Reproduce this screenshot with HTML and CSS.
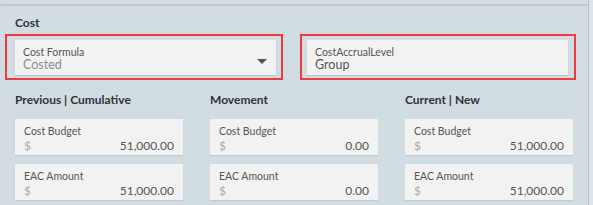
FILE: index.html
```html
<!DOCTYPE html>
<html lang="en">
<head>
<meta charset="UTF-8">
<meta name="viewport" content="width=device-width, initial-scale=1.0">
<title>Cost</title>
<link rel="stylesheet" href="styles.css">
</head>
<body>
    <div class="panel">
        <div class="top-band"></div>

        <h3 class="section-title">Cost</h3>

        <div class="field-row">
            <div class="highlight hl-formula">
                <div class="field field-select">
                    <div class="field-label">Cost Formula</div>
                    <div class="field-value muted">Costed</div>
                    <span class="caret"></span>
                </div>
            </div>
            <div class="highlight hl-accrual">
                <div class="field">
                    <div class="field-label">CostAccrualLevel</div>
                    <div class="field-value">Group</div>
                </div>
            </div>
        </div>

        <div class="columns">
            <div class="col">
                <h4 class="col-title">Previous | Cumulative</h4>
                <div class="card">
                    <div class="card-label">Cost Budget</div>
                    <div class="card-row"><span class="currency">$</span><span class="amount">51,000.00</span></div>
                </div>
                <div class="card">
                    <div class="card-label">EAC Amount</div>
                    <div class="card-row"><span class="currency">$</span><span class="amount">51,000.00</span></div>
                </div>
            </div>
            <div class="col">
                <h4 class="col-title">Movement</h4>
                <div class="card">
                    <div class="card-label">Cost Budget</div>
                    <div class="card-row"><span class="currency">$</span><span class="amount">0.00</span></div>
                </div>
                <div class="card">
                    <div class="card-label">EAC Amount</div>
                    <div class="card-row"><span class="currency">$</span><span class="amount">0.00</span></div>
                </div>
            </div>
            <div class="col">
                <h4 class="col-title">Current | New</h4>
                <div class="card">
                    <div class="card-label">Cost Budget</div>
                    <div class="card-row"><span class="currency">$</span><span class="amount">51,000.00</span></div>
                </div>
                <div class="card">
                    <div class="card-label">EAC Amount</div>
                    <div class="card-row"><span class="currency">$</span><span class="amount">51,000.00</span></div>
                </div>
            </div>
        </div>
    </div>
</body>
</html>
```

FILE: styles.css
```css
body {
    margin: 0;
    padding: 0;
    font-family: Lato, "Noto Sans", sans-serif;
    background-color: #dde4e7;
    color: #444;
}
.panel {
    width: 589px;
    height: 205px;
    background-color: #d1dde2;
    border-right: 1px solid #b7c2c6;
    box-sizing: border-box;
    overflow: hidden;
}
.top-band {
    height: 4px;
    background-color: #d5dfe3;
    border-bottom: 1px solid #b9c4c8;
    box-shadow: 0 1px 2px rgba(0, 0, 0, 0.08);
}
.section-title {
    margin: 10px 0 0 15px;
    font-size: 12px;
    line-height: 16px;
    font-weight: bold;
    color: #333;
}

/* highlighted fields */
.field-row {
    display: flex;
    gap: 17px;
    margin-top: 3px;
    padding-left: 5px;
}
.highlight {
    border: 2px solid #ee3b3f;
    box-sizing: border-box;
    height: 46px;
    padding-top: 4px;
}
.hl-formula {
    width: 278px;
    padding-left: 8px;
}
.hl-accrual {
    width: 276px;
    padding-left: 5px;
}
.field {
    position: relative;
    width: 261px;
    height: 35px;
    box-sizing: border-box;
    padding: 6px 8px 0;
    background-color: #f2f2f2;
    box-shadow: 0 1px 1px rgba(0, 0, 0, 0.12);
}
.field-label {
    font-size: 10.5px;
    line-height: 12px;
    color: #555;
}
.field-value {
    font-size: 12.5px;
    line-height: 14px;
    color: #555;
}
.field-value.muted {
    color: #8c8c8c;
}
.caret {
    position: absolute;
    right: 9px;
    top: 19px;
    width: 0;
    height: 0;
    border-left: 5px solid transparent;
    border-right: 5px solid transparent;
    border-top: 5px solid #555;
}

/* three columns */
.columns {
    display: flex;
    gap: 27px;
    margin-top: 12px;
    padding-left: 15px;
}
.col {
    width: 168px;
}
.col-title {
    margin: 0 0 11px;
    font-size: 12px;
    line-height: 16px;
    font-weight: bold;
    color: #333;
}
.card {
    height: 36px;
    box-sizing: border-box;
    padding: 6px 9px 0;
    margin-bottom: 9px;
    background-color: #f2f2f2;
    box-shadow: 0 1px 1px rgba(0, 0, 0, 0.08);
}
.card-label {
    font-size: 10.5px;
    line-height: 13px;
    color: #555;
}
.card-row {
    display: flex;
    justify-content: space-between;
    font-size: 12px;
    line-height: 16px;
}
.currency {
    color: #aaa;
}
.amount {
    color: #555;
}
```
